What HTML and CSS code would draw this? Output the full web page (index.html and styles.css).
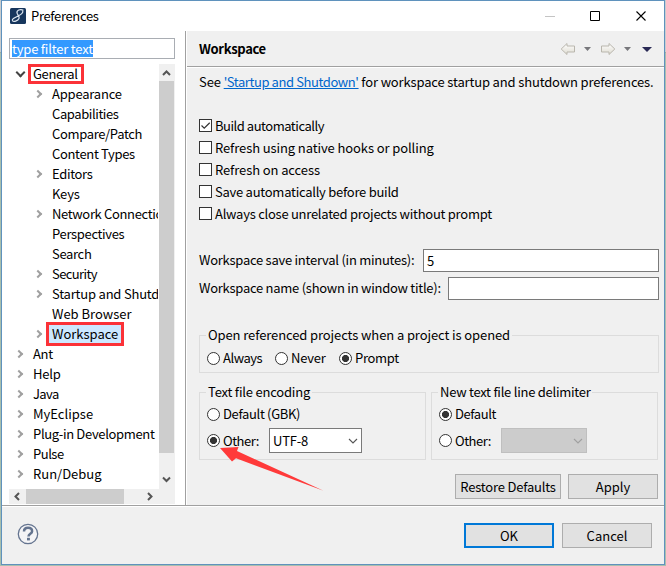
FILE: index.html
```html
<!DOCTYPE html>
<html lang="en">
<head>
<meta charset="utf-8">
<title>Preferences</title>
<link rel="stylesheet" href="styles.css">
</head>
<body>
<div class="window">
  <header class="titlebar">
    <svg class="logo" width="16" height="16" viewBox="0 0 16 16"><rect width="16" height="16" rx="1.500" fill="#17365d"/><path d="M13.500 2.200C10 .8 6.500 2.200 7 5c.4 2 3 3.300 2 5.600C8 13 3.500 14.300 2.500 12.700 1.500 10.800 5 9.500 8.500 7.800 11 6.600 14 4.500 12.500 2.500" fill="none" stroke="#dce6f0" stroke-width="1.200"/></svg>
    <span class="title t3">Preferences</span>
    <svg class="controls" width="102" height="16" viewBox="0 0 102 16"><path d="M0 8.500h10" stroke="#c4c4c4"/><path d="M45.500 3.500h9v9h-9z" fill="none" stroke="#000"/><path d="M91.500 3.500l9 9M100.500 3.500l-9 9" stroke="#000" stroke-width="1.100"/></svg>
  </header>
  <main class="content">
    <aside class="sidebar">
      <div class="filter"><span class="selection t2">type filter text</span></div>
      <div class="tree-area">
        <ul class="tree">
          <li class="open"><span class="mark mark-top t3">General</span></li>
          <li class="sub has t2">Appearance</li>
          <li class="sub t4">Capabilities</li>
          <li class="sub t3">Compare/Patch</li>
          <li class="sub t3">Content Types</li>
          <li class="sub has t3">Editors</li>
          <li class="sub t2">Keys</li>
          <li class="sub has t3">Network Connections</li>
          <li class="sub t3">Perspectives</li>
          <li class="sub t3">Search</li>
          <li class="sub has t6">Security</li>
          <li class="sub has t2">Startup and Shutdown</li>
          <li class="sub">Web Browser</li>
          <li class="sub has"><span class="mark mark-selected">Workspace</span></li>
          <li class="has t3">Ant</li>
          <li class="has t2">Help</li>
          <li class="has t6">Java</li>
          <li class="has">MyEclipse</li>
          <li class="has t3">Plug-in Development</li>
          <li class="has t5">Pulse</li>
          <li class="has">Run/Debug</li>
        </ul>
        <div class="vscroll">
          <svg width="15" height="17" viewBox="0 0 15 17"><path d="M4 11l3.500-3.500L11 11" class="arrow"/></svg>
          <div class="vthumb"></div>
          <svg class="last" width="15" height="17" viewBox="0 0 15 17"><path d="M4 5.500L7.500 9 11 5.500" class="arrow"/></svg>
        </div>
      </div>
      <div class="hscroll">
        <svg width="17" height="15" viewBox="0 0 17 15"><path d="M10 4L6.500 7.500 10 11" class="arrow"/></svg>
        <div class="hthumb"></div>
        <svg class="right" width="17" height="15" viewBox="0 0 17 15"><path d="M6 4l3.500 3.500L6 11" class="arrow"/></svg>
      </div>
    </aside>
    <section class="page">
      <div class="page-head">
        <h1 class="t3">Workspace</h1>
        <svg width="92" height="14" viewBox="0 0 92 14"><defs><linearGradient id="g" x2="0" y2="1"><stop offset="0" stop-color="#fff"/><stop offset="1" stop-color="#dedbd0"/></linearGradient></defs><path d="M.2 7L6 1.500V4h7.500v6H6v2.500z" fill="url(#g)" stroke="#b9b6ad"/><path d="M23 5h7l-3.500 4z" fill="#77777b"/><path d="M53.800 7L48 1.500V4h-7.500v6h7.500v2.500z" fill="url(#g)" stroke="#b9b6ad"/><path d="M63 5h7l-3.500 4z" fill="#77777b"/><path d="M81 5h10l-5 5z" fill="#292955"/></svg>
      </div>
      <div class="page-body">
        <p class="intro"><span class="t1">See </span><a class="t4" href="#">'Startup and Shutdown'</a><span class="after-link"> for workspace startup and shutdown preferences.</span></p>
        <div class="checks">
          <label><svg class="box" width="13" height="13" viewBox="0 0 13 13"><path d="M1.800 6.500L5 9.700 11.500 3.200" fill="none" stroke="#333" stroke-width="1.400"/></svg><span class="t5">Build automatically</span></label>
          <label><i class="box"></i><span class="t1">Refresh using native hooks or polling</span></label>
          <label><i class="box"></i><span class="t1">Refresh on access</span></label>
          <label><i class="box"></i><span class="t25">Save automatically before build</span></label>
          <label><i class="box"></i><span class="t25">Always close unrelated projects without prompt</span></label>
        </div>
        <div class="field first"><span class="f1 t25">Workspace save interval (in minutes):</span><div class="input">5</div></div>
        <div class="field"><span class="f2 t25">Workspace name (shown in window title):</span><div class="input"></div></div>
        <div class="group referenced">
          <div class="legend t1">Open referenced projects when a project is opened</div>
          <div class="radios"><label class="always t5"><i class="radio"></i>Always</label><label class="never t2"><i class="radio"></i>Never</label><label class="t3"><i class="radio on"></i>Prompt</label></div>
        </div>
        <div class="groups">
          <div class="group">
            <div class="legend t2">Text file encoding</div>
            <div class="radios short"><label class="t3"><i class="radio"></i>Default (GBK)</label></div>
            <div class="radios other"><label class="t5"><i class="radio on"></i>Other:</label><div class="combo encoding t2">UTF-8<svg width="10" height="6" viewBox="0 0 10 6"><path d="M1 1l4 4 4-4" fill="none" stroke="#555" stroke-width="1.100"/></svg></div></div>
          </div>
          <div class="group">
            <div class="legend t25">New text file line delimiter</div>
            <div class="radios short"><label class="t4"><i class="radio on"></i>Default</label></div>
            <div class="radios other"><label class="t5"><i class="radio"></i>Other:</label><div class="combo disabled"><svg width="10" height="6" viewBox="0 0 10 6"><path d="M1 1l4 4 4-4" fill="none" stroke="#a0a0a0" stroke-width="1.100"/></svg></div></div>
          </div>
        </div>
        <div class="actions"><div class="button restore t2">Restore Defaults</div><div class="button">Apply</div></div>
      </div>
    </section>
  </main>
  <footer class="footer">
    <svg width="22" height="22" viewBox="0 0 22 22"><circle cx="11" cy="11" r="9.700" fill="#f4f4f6" stroke="#64748f" stroke-width="1.300"/><path d="M7 8.600C7 6 8.800 4.800 11 4.800s4.100 1.100 4.100 3.400c0 2.700-3.600 2.500-3.600 5.300" fill="none" stroke="#64748f" stroke-width="2.500"/><path d="M10 14.800h2.900v2.600H10z" fill="#64748f"/></svg>
    <div class="button ok">OK</div><div class="button">Cancel</div>
  </footer>
</div>
<svg class="pointer" width="106" height="46" viewBox="0 0 106 46"><path d="M1 2L19.500 1 18 5 104.500 44.700 17 12.200 13 15.500z" fill="#ff3a3a"/></svg>
</body>
</html>
```
FILE: styles.css
```css
*, *::before { box-sizing: border-box; }
body {
  margin: 0;
  width: 666px;
  height: 566px;
  padding: 0 1px 1px;
  overflow: hidden;
  background: linear-gradient(#c9cdcf 0 52px, #9aa9a2 52px 53px, #a8bfae 53px 100%);
  font: 13px/20px "Noto Sans CJK SC", "Noto Sans", sans-serif;
  color: #000;
}
svg { display: block; flex: none; }
/* letter spacing steps */
.t1 { letter-spacing: -.1px; }
.t2 { letter-spacing: -.2px; }
.t25 { letter-spacing: -.26px; }
.t3 { letter-spacing: -.34px; }
.t4 { letter-spacing: -.41px; }
.t5 { letter-spacing: -.48px; }
.t6 { letter-spacing: -.6px; }
.after-link { letter-spacing: -.15px; }
.window { height: 565px; border: 1px solid #5f92bd; background: #fff; display: flex; flex-direction: column; }
.titlebar { height: 30px; flex: none; display: flex; align-items: center; padding: 0 17px 0 8px; }
.title { margin-left: 5px; }
.controls { margin-left: auto; }
.content { display: flex; height: 474px; flex: none; }
.sidebar { width: 183px; flex: none; padding: 7px 10px 0 7px; display: flex; flex-direction: column; }
.filter { height: 21px; border: 1px solid #a9adb3; padding: 1px 2px; flex: none; }
.selection { display: block; width: 81px; height: 17px; line-height: 17px; background: #3399ff; color: #fff; white-space: nowrap; }
.tree-area { display: flex; margin-top: 5px; height: 425px; flex: none; }
.tree { list-style: none; margin: 0; padding: 0; width: 149px; overflow: hidden; margin-right: 1px; }
.tree li { height: 20px; padding-left: 24px; display: flex; align-items: center; white-space: nowrap; position: relative; }
.tree .sub { padding-left: 43px; }
.has::before, .open::before {
  content: ""; position: absolute; left: 7px; top: 7px; width: 6px; height: 6px;
  border: solid #a0a0a0; border-width: 1.9px 1.9px 0 0; border-width: 2px 2px 0 0; transform: rotate(45deg);
}
.sub.has::before { left: 26px; }
.open::before { left: 8px; top: 5px; width: 7px; height: 7px; border-color: #444; transform: rotate(135deg); }
.mark { border: 3px solid #fb3238; position: relative; flex: none; }
.mark-top { margin-left: -5px; width: 56px; height: 20px; line-height: 14px; padding-left: 2px; }
.mark-selected { margin-left: -6px; width: 78px; height: 24px; line-height: 18px; padding-left: 3px; background: #cce8ff; }
.vscroll { width: 16px; background: #f0f0f0; display: flex; flex-direction: column; }
.vthumb { height: 372px; width: 15px; background: #cdcdcd; }
.vscroll .last { margin-top: auto; }
.hscroll { height: 15px; background: #f0f0f0; display: flex; flex: none; }
.hthumb { width: 98px; background: #cdcdcd; }
.hscroll .right { margin-left: 18px; }
.arrow { fill: none; stroke: #555; stroke-width: 2; }
.page { flex: 1; min-width: 0; border-left: 1px solid #a0a0a0; box-shadow: inset 1px 0 #fff; background: #f0f0f0; padding-left: 1px; }
.page-head { height: 37px; border-bottom: 1px solid #fff; box-shadow: inset 0 -1px #a0a0a0; display: flex; align-items: center; justify-content: space-between; padding: 0 11px 0 12px; }
h1 { margin: 0; font-size: 13px; line-height: 20px; }
.page-body { padding: 0 5px 0 12px; }
.intro { margin: 0; height: 28px; line-height: 28px; white-space: nowrap; }
a { color: #0066cc; }
.checks { margin-top: 19px; }
.checks label { height: 22px; line-height: 22px; display: flex; white-space: nowrap; }
.box { width: 13px; height: 13px; margin: 4px 3px 0 0; border: 1px solid #333; background: #fff; flex: none; }
.field { display: flex; height: 23px; line-height: 22px; margin-top: 5px; white-space: nowrap; }
.field.first { margin-top: 24px; }
.f1 { width: 224px; flex: none; }
.f2 { width: 249px; flex: none; }
.input { flex: 1; border: 1px solid #7a7a7a; background: #fff; line-height: 21px; padding-left: 3px; }
.group { border: 1px solid #dcdcdc; height: 68px; width: 227px; }
.group.referenced { height: 38px; width: auto; margin-top: 35px; }
.groups { display: flex; gap: 5px; margin-top: 19px; }
.legend { width: fit-content; margin: -11px 0 0 6px; padding: 0 2px; background: #f0f0f0; white-space: nowrap; }
.radios { display: flex; align-items: center; padding-left: 7px; height: 20px; margin-top: 3px; }
.radios label { display: flex; align-items: center; white-space: nowrap; }
.radios .always { width: 68px; }
.radios .never { width: 64px; }
.radio { width: 13px; height: 13px; border: 1px solid #333; border-radius: 50%; background: #fff; margin-right: 3px; flex: none; }
.radio.on { background: radial-gradient(circle, #333 0 3.2px, #fff 3.9px); }
.radios.short { margin-top: 2px; }
.radios.other { height: 25px; margin-top: 4px; }
.radios.other label { width: 62px; }
.combo { height: 25px; width: 93px; border: 1px solid #7a7a7a; background: #fff; display: flex; align-items: center; justify-content: space-between; padding: 0 3px; line-height: 22px; }
.combo svg { margin-left: auto; }
.combo.disabled { width: 86px; background: #ccc; border-color: #bfbfbf; }
.actions { display: flex; justify-content: flex-end; gap: 7px; margin-top: 14px; padding-right: 1px; }
.button { width: 90px; height: 25px; line-height: 23px; border: 1px solid #adadad; background: #e1e1e1; text-align: center; white-space: nowrap; }
.restore { width: 106px; }
.footer { flex: 1; border-top: 1px solid #a0a0a0; box-shadow: inset 0 1px #fff; background: #f0f0f0; display: flex; padding: 17px 12px 0 15px; gap: 8px; }
.ok { margin-left: auto; border: 2px solid #0078d7; line-height: 21px; }
.pointer { position: absolute; left: 219px; top: 446px; }
```
